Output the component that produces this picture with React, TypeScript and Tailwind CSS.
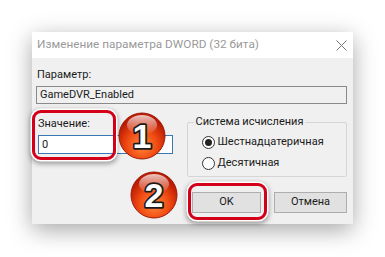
import React from 'react';

const font = { fontFamily: 'Roboto, "Noto Sans", sans-serif' };

const Badge = ({ n, id }: { n: string; id: string }) => (
  <svg width="48" height="48" viewBox="0 0 48 48">
    <defs>
      <radialGradient id={`b${id}`} cx="50%" cy="70%" r="60%">
        <stop offset="0%" stopColor="#ff8a3c" />
        <stop offset="55%" stopColor="#f04a12" />
        <stop offset="100%" stopColor="#b81a04" />
      </radialGradient>
      <linearGradient id={`g${id}`} x1="0" y1="0" x2="0" y2="1">
        <stop offset="0%" stopColor="#fff" stopOpacity="0.75" />
        <stop offset="100%" stopColor="#fff" stopOpacity="0" />
      </linearGradient>
    </defs>
    <circle cx="24" cy="24" r="23" fill={`url(#b${id})`} stroke="#a01804" strokeWidth="1" />
    <ellipse cx="24" cy="13" rx="15" ry="10" fill={`url(#g${id})`} />
    <text
      x="24"
      y="36"
      textAnchor="middle"
      fontSize="34"
      fontWeight="bold"
      fontFamily='"Liberation Sans", Arial, sans-serif'
      fill="#fff"
      stroke="#1a1a1a"
      strokeWidth="3.5"
      strokeLinejoin="round"
      paintOrder="stroke"
    >
      {n}
    </text>
  </svg>
);

const Radio = ({ checked }: { checked?: boolean }) => (
  <span className="w-[13px] h-[13px] rounded-full border border-[#333] bg-white flex items-center justify-center">
    {checked && <span className="w-[7px] h-[7px] rounded-full bg-[#222]" />}
  </span>
);

export default function App() {
  return (
    <div className="w-[385px] h-[257px] bg-white relative pt-[32px] pl-[32px]" style={font}>
      <div className="w-[321px] h-[192px] flex flex-col shadow-[0_6px_22px_rgba(0,0,0,0.35)]">
        <div className="h-[26px] bg-white flex items-center justify-between pl-[5px] pr-[6px]">
          <span className="text-[11.8px] text-[#9a9a9a]">Изменение параметра DWORD (32 бита)</span>
          <svg width="11" height="11" viewBox="0 0 11 11">
            <path d="M0.5 0.5 L10.5 10.5 M10.5 0.5 L0.5 10.5" stroke="#777" strokeWidth="1" />
          </svg>
        </div>
        <div className="flex-1 bg-[#f0f0f0] pl-[4px] pr-[6px] pt-[9px] flex flex-col text-[11px] text-[#1a1a1a]">
          <div className="leading-[16px] pl-[1px]">Параметр:</div>
          <div className="mt-[3px] h-[18px] border border-[#8a8a8a] bg-[#f0f0f0] leading-[16px] pl-[3px]">
            GameDVR_Enabled
          </div>
          <div className="flex mt-[11px]">
            <div className="w-[137px] pl-[2px] pt-[1px]">
              <div className="leading-[16px]">Значение:</div>
              <div className="mt-[3px] h-[19px] border border-[#3a78b5] bg-white leading-[17px] pl-[3px]">
                0
              </div>
            </div>
            <div className="ml-[14px] w-[161px] h-[55px] relative border border-[#d5d5d5] rounded-[2px] mt-[7px] pt-[10px] pl-[14px]">
              <span className="absolute -top-[9px] left-[6px] px-[2px] bg-[#f0f0f0] leading-[16px]">
                Система исчисления
              </span>
              <div className="flex items-center gap-[3px] h-[18px]">
                <Radio checked />
                <span>Шестнадцатеричная</span>
              </div>
              <div className="flex items-center gap-[3px] h-[18px] mt-[3px]">
                <Radio />
                <span>Десятичная</span>
              </div>
            </div>
          </div>
          <div className="flex justify-end gap-[13px] mt-[15px]">
            <button className="w-[69px] h-[21px] border border-[#adadad] bg-[#e1e1e1]">OK</button>
            <button className="w-[73px] h-[21px] border border-[#adadad] bg-[#e1e1e1]">Отмена</button>
          </div>
        </div>
      </div>

      {/* annotations */}
      <div className="absolute left-[32px] top-[110px] w-[84px] h-[50px] rounded-[9px] border-[3px] border-[#d4001a] shadow-[0_0_0_1.5px_#fff,0_2px_5px_1.5px_rgba(0,0,0,0.35)]" />
      <div className="absolute left-[188px] top-[183px] w-[79px] h-[37px] rounded-[9px] border-[3px] border-[#d4001a] shadow-[0_0_0_1.5px_#fff,0_2px_5px_1.5px_rgba(0,0,0,0.35)]" />
      <div className="absolute left-[118px] top-[112px]">
        <Badge n="1" id="1" />
      </div>
      <div className="absolute left-[130px] top-[171px]">
        <Badge n="2" id="2" />
      </div>
    </div>
  );
}
